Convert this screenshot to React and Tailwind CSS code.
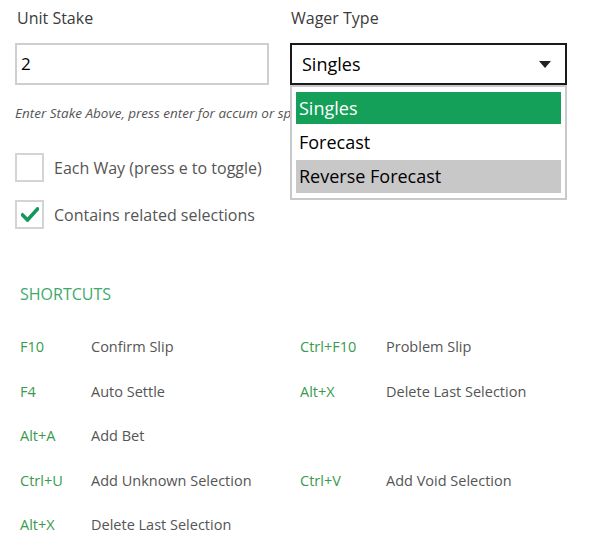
import React from "react";

const font = { fontFamily: '"Open Sans", "Noto Sans", sans-serif' };

function Checkbox({ checked }) {
  return (
    <div className="w-[29px] h-[29px] border-2 border-[#d4d4d4] bg-white flex items-center justify-center shrink-0">
      {checked && (
        <svg width="18" height="15" viewBox="0 0 18 15">
          <path d="M1.5 8 L6.5 13 L16.5 2" fill="none" stroke="#13985a" strokeWidth="3.6" strokeLinecap="square" />
        </svg>
      )}
    </div>
  );
}

const rows = [
  ["F10", "Confirm Slip", "Ctrl+F10", "Problem Slip"],
  ["F4", "Auto Settle", "Alt+X", "Delete Last Selection"],
  ["Alt+A", "Add Bet", "", ""],
  ["Ctrl+U", "Add Unknown Selection", "Ctrl+V", "Add Void Selection"],
  ["Alt+X", "Delete Last Selection", "", ""],
];

export default function App() {
  return (
    <div className="w-[610px] h-[549px] bg-white relative overflow-hidden" style={font}>
      <div className="flex pt-[5px]">
        <div className="ml-[15px] w-[254px]">
          <div className="text-[16px] text-[#3b3b3b] pl-[2px] h-[26px] leading-[26px]">Unit Stake</div>
          <div className="mt-[12px] h-[42px] border-2 border-[#cfcfcf] flex items-center pl-[4px] text-[17px] text-black">2</div>
        </div>
        <div className="ml-[21px] w-[277px] relative">
          <div className="text-[16px] text-[#3b3b3b] pl-[1px] h-[26px] leading-[26px]">Wager Type</div>
          <div className="mt-[12px] h-[42px] border-2 border-[#1a1a1a] flex items-center justify-between pl-[10px] pr-[14px] text-[18px] text-black">
            <span>Singles</span>
            <svg width="12" height="7" viewBox="0 0 12 7"><path d="M0 0 H12 L6 7 Z" fill="#222" /></svg>
          </div>
          <div className="absolute left-0 top-[80px] w-[277px] border-2 border-[#c9c9c9] bg-white px-[4px] pt-[5px] pb-[5px] z-10">
            <div className="h-[32px] bg-[#15a05a] text-white text-[18px] flex items-center pl-[3px]">Singles</div>
            <div className="h-[36px] text-black text-[18px] flex items-center pl-[3px]">Forecast</div>
            <div className="h-[33px] bg-[#c8c8c9] text-black text-[18px] flex items-center pl-[3px]">Reverse Forecast</div>
          </div>
        </div>
      </div>
      <div className="ml-[15px] mt-[18px] w-[275px] overflow-hidden text-[13.5px] italic text-[#555] whitespace-nowrap">
        Enter Stake Above, press enter for accum or split bets
      </div>
      <div className="ml-[15px] mt-[30px] flex items-center gap-[10px]">
        <Checkbox />
        <span className="text-[16px] text-[#555]">Each Way (press e to toggle)</span>
      </div>
      <div className="ml-[15px] mt-[18px] flex items-center gap-[10px]">
        <Checkbox checked />
        <span className="text-[16px] text-[#555]">Contains related selections</span>
      </div>
      <div className="ml-[20px] mt-[53px] text-[16px] text-[#3daa6a]">SHORTCUTS</div>
      <div className="ml-[20px] mt-[30px] grid grid-cols-[71px_209px_86px_1fr] auto-rows-[44.5px] text-[14.5px]">
        {rows.map((r, i) => (
          <React.Fragment key={i}>
            <div className="text-[#3a9a4e]">{r[0]}</div>
            <div className="text-[#555]">{r[1]}</div>
            <div className="text-[#3a9a4e]">{r[2]}</div>
            <div className="text-[#555]">{r[3]}</div>
          </React.Fragment>
        ))}
      </div>
    </div>
  );
}
